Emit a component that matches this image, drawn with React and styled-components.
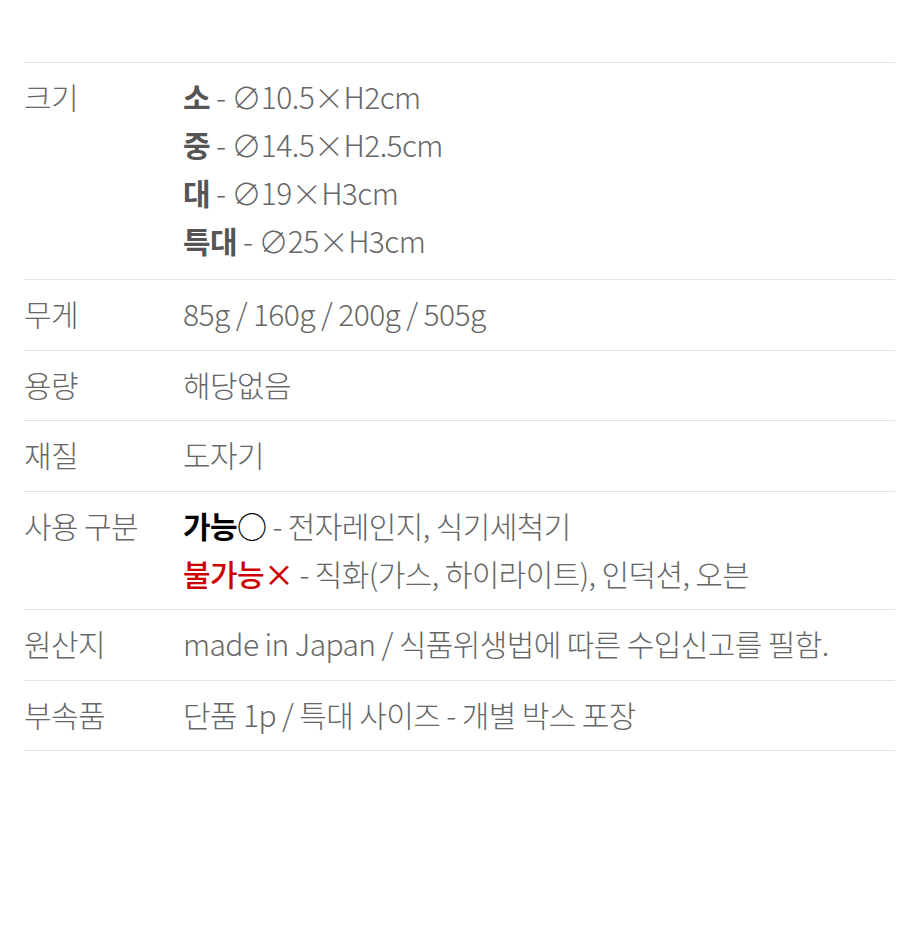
import React from "react";
import styled, { createGlobalStyle } from "styled-components";

const GlobalStyle = createGlobalStyle`
  html, body {
    margin: 0;
    padding: 0;
    background: #fff;
  }
  body {
    font-family: "Noto Sans CJK KR", "Noto Sans", sans-serif;
  }
`;

const sizes = [
  { name: "소", spec: "∅10.5×H2cm" },
  { name: "중", spec: "∅14.5×H2.5cm" },
  { name: "대", spec: "∅19×H3cm" },
  { name: "특대", spec: "∅25×H3cm" },
];

const App = () => {
  return (
    <>
      <GlobalStyle />
      <Page>
        <Table>
          <Row $bottom={15}>
            <Label>크기</Label>
            <Value>
              {sizes.map((item) => (
                <Line key={item.name}>
                  <Strong>{item.name}</Strong> - {item.spec}
                </Line>
              ))}
            </Value>
          </Row>
          <Row>
            <Label>무게</Label>
            <Value>85g / 160g / 200g / 505g</Value>
          </Row>
          <Row>
            <Label>용량</Label>
            <Value>해당없음</Value>
          </Row>
          <Row>
            <Label>재질</Label>
            <Value>도자기</Value>
          </Row>
          <Row>
            <Label>사용 구분</Label>
            <Value>
              <Line>
                <Ok>가능</Ok>
                <Mark>○</Mark> - 전자레인지, 식기세척기
              </Line>
              <Line>
                <No>불가능×</No> - 직화(가스, 하이라이트), 인덕션, 오븐
              </Line>
            </Value>
          </Row>
          <Row>
            <Label>원산지</Label>
            <Value>made in Japan / 식품위생법에 따른 수입신고를 필함.</Value>
          </Row>
          <Row>
            <Label>부속품</Label>
            <Value>단품 1p / 특대 사이즈 - 개별 박스 포장</Value>
          </Row>
        </Table>
      </Page>
    </>
  );
};

const Page = styled.div`
  width: 914px;
  height: 950px;
  padding: 62px 19px 0 24px;
  box-sizing: border-box;
`;

const Table = styled.div`
  border-top: 1px solid #e2e2e2;
`;

const Row = styled.div`
  display: grid;
  grid-template-columns: 159px auto;
  padding: 9px 0 ${(p) => p.$bottom ?? 12.5}px;
  border-bottom: 1px solid #e2e2e2;
  font-size: 30px;
  line-height: 48px;
  font-weight: 300;
  color: #666;
  letter-spacing: -0.6px;
`;

const Label = styled.div`
  color: #666;
`;

const Value = styled.div``;

const Line = styled.div`
  white-space: nowrap;
`;

const Strong = styled.span`
  font-weight: 700;
  color: #555;
`;

const Ok = styled.span`
  font-weight: 700;
  color: #000;
`;

const Mark = styled.span`
  color: #000;
  font-weight: 400;
`;

const No = styled.span`
  font-weight: 500;
  color: #cc0000;
`;

export default App;
